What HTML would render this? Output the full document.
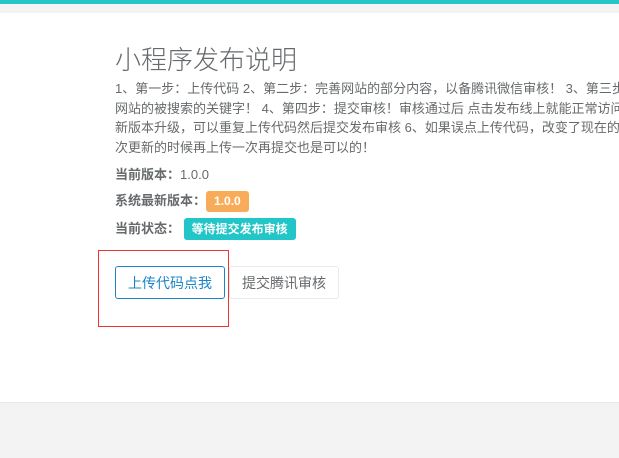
<!DOCTYPE html>
<html><head><meta charset="utf-8"><style>
body{margin:0;width:619px;height:457px;overflow:hidden;background:#fff;font-family:"Liberation Sans","Noto Sans CJK SC",sans-serif;color:#676a6c;position:relative}
.top{position:absolute;left:0;top:0;width:619px;height:4px;background:#23c6c8}
.strip{position:absolute;left:0;top:4px;width:619px;height:9px;background:#f3f3f4}
.bot{position:absolute;left:0;top:402px;width:619px;height:55px;background:#f3f3f4;border-top:1px solid #e7eaec}
h1{position:absolute;left:115px;top:43px;margin:0;font-size:26px;font-weight:300;color:#676a6c;line-height:34px}
.p{position:absolute;left:115px;top:79px;width:504px;overflow:hidden;font-size:13px;line-height:19.5px;white-space:nowrap}
.row{position:absolute;left:115px;font-size:13px;white-space:nowrap}
.row b{font-weight:bold}
.lab{display:inline-block;color:#fff;font-weight:bold;font-size:12px;border-radius:3px;padding:0 8px;line-height:21px}
.red{position:absolute;left:98px;top:250px;width:129px;height:75px;border:1px solid #e33}
.btn{position:absolute;top:266px;height:33px;line-height:33px;font-size:14px;border-radius:3px;text-align:center;box-sizing:border-box}
</style></head><body>
<div class="top"></div><div class="strip"></div>
<h1>小程序发布说明</h1>
<div class="p">1、第一步：上传代码 2、第二步：完善网站的部分内容，以备腾讯微信审核！ 3、第三步：设置<br>网站的被搜索的关键字！ 4、第四步：提交审核！审核通过后 点击发布线上就能正常访问<br>新版本升级，可以重复上传代码然后提交发布审核 6、如果误点上传代码，改变了现在的<br>次更新的时候再上传一次再提交也是可以的！</div>
<div class="row" style="top:164px"><b>当前版本：</b>1.0.0</div>
<div class="row" style="top:190px;line-height:21px"><b>系统最新版本：</b><span class="lab" style="background:#f8ac59">1.0.0</span></div>
<div class="row" style="top:218px;line-height:22px"><b>当前状态：</b> <span class="lab" style="background:#23c6c8;line-height:22px">等待提交发布审核</span></div>
<div class="red"></div>
<div class="btn" style="left:115px;width:110px;border:1px solid #1c84c6;color:#1c84c6">上传代码点我</div>
<div class="btn" style="left:229px;width:110px;border:1px solid #e7eaec;color:#676a6c">提交腾讯审核</div>
<div class="bot"></div>
</body></html>
